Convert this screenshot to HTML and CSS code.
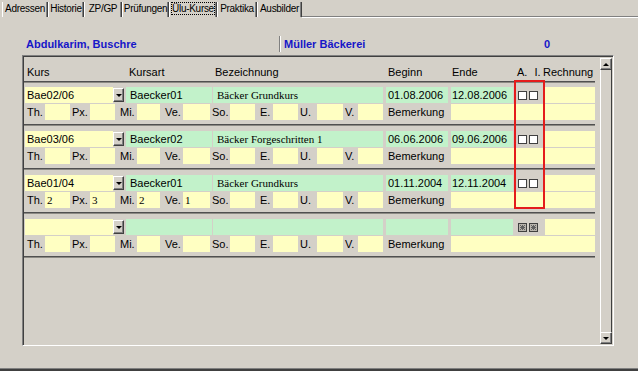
FILE: index.html
```html
<!DOCTYPE html>
<html lang="de">
<head>
  <meta charset="UTF-8" />
  <title>Ülu-Kurse</title>
  <link rel="stylesheet" href="styles.css">
</head>
<body>

<div class="tabs">
  <div class="tab t-adr">Adressen</div>
  <div class="tab t-his">Historie</div>
  <div class="tab t-zp">ZP/GP</div>
  <div class="tab t-pru">Prüfungen</div>
  <div class="tab t-ulu"><span class="focus">Ülu-Kurse</span></div>
  <div class="tab t-pra">Praktika</div>
  <div class="tab t-aus">Ausbilder</div>
  <div class="tab-rest"></div>
</div>

<div class="info">
  <div class="info-name">Abdulkarim, Buschre</div>
  <div class="info-sep"></div>
  <div class="info-company">Müller Bäckerei</div>
  <div class="info-count">0</div>
</div>

<div class="frame">
  <div class="list">
    <div class="head">
      <div class="pl2">Kurs</div>
      <div></div>
      <div class="pl5">Kursart</div>
      <div class="pl3">Bezeichnung</div>
      <div class="pl5">Beginn</div>
      <div class="pl4">Ende</div>
      <div class="head-ai"><span>A.</span><span>I.</span></div>
      <div class="head-rech">Rechnung</div>
    </div>
    <div class="rule"></div>

    <!-- Kurs 1 -->
    <div class="record">
      <div class="row-a">
        <div class="y pl2">Bae02/06</div>
        <div class="drop"></div>
        <div class="g ml2 pl4">Baecker01</div>
        <div class="g ml1 pl4 serif">Bäcker Grundkurs</div>
        <div class="g ml3 pl2">01.08.2006</div>
        <div class="g ml3 pl1">12.08.2006</div>
        <div class="chk"><span class="box"></span><span class="box"></span></div>
        <div class="y"></div>
      </div>
      <div class="row-b">
        <div class="lbl">Th.</div><div class="y"></div>
        <div class="lbl">Px.</div><div class="y"></div>
        <div class="lbl lbl-wide">Mi.</div><div class="y"></div>
        <div class="lbl lbl-wide">Ve.</div><div class="y"></div>
        <div class="lbl">So.</div><div class="y"></div>
        <div class="lbl lbl-wide">E.</div><div class="y"></div>
        <div class="lbl">U.</div><div class="y"></div>
        <div class="lbl">V.</div><div class="y"></div>
        <div class="lbl ml3">Bemerkung</div><div class="y ml3"></div>
      </div>
      <div class="sep"></div>
    </div>

    <!-- Kurs 2 -->
    <div class="record">
      <div class="row-a">
        <div class="y pl2">Bae03/06</div>
        <div class="drop"></div>
        <div class="g ml2 pl4">Baecker02</div>
        <div class="g ml1 pl4 serif">Bäcker Forgeschritten 1</div>
        <div class="g ml3 pl2">06.06.2006</div>
        <div class="g ml3 pl1">09.06.2006</div>
        <div class="chk"><span class="box"></span><span class="box"></span></div>
        <div class="y"></div>
      </div>
      <div class="row-b">
        <div class="lbl">Th.</div><div class="y"></div>
        <div class="lbl">Px.</div><div class="y"></div>
        <div class="lbl lbl-wide">Mi.</div><div class="y"></div>
        <div class="lbl lbl-wide">Ve.</div><div class="y"></div>
        <div class="lbl">So.</div><div class="y"></div>
        <div class="lbl lbl-wide">E.</div><div class="y"></div>
        <div class="lbl">U.</div><div class="y"></div>
        <div class="lbl">V.</div><div class="y"></div>
        <div class="lbl ml3">Bemerkung</div><div class="y ml3"></div>
      </div>
      <div class="sep"></div>
    </div>

    <!-- Kurs 3 -->
    <div class="record">
      <div class="row-a">
        <div class="y pl2">Bae01/04</div>
        <div class="drop"></div>
        <div class="g ml2 pl4">Baecker01</div>
        <div class="g ml1 pl4 serif">Bäcker Grundkurs</div>
        <div class="g ml3 pl2">01.11.2004</div>
        <div class="g ml3 pl1">12.11.2004</div>
        <div class="chk"><span class="box"></span><span class="box"></span></div>
        <div class="y"></div>
      </div>
      <div class="row-b">
        <div class="lbl">Th.</div><div class="y num">2</div>
        <div class="lbl">Px.</div><div class="y num">3</div>
        <div class="lbl lbl-wide">Mi.</div><div class="y num">2</div>
        <div class="lbl lbl-wide">Ve.</div><div class="y num">1</div>
        <div class="lbl">So.</div><div class="y"></div>
        <div class="lbl lbl-wide">E.</div><div class="y"></div>
        <div class="lbl">U.</div><div class="y"></div>
        <div class="lbl">V.</div><div class="y"></div>
        <div class="lbl ml3">Bemerkung</div><div class="y ml3"></div>
      </div>
      <div class="sep"></div>
    </div>

    <!-- neuer Kurs -->
    <div class="record">
      <div class="row-a">
        <div class="y"></div>
        <div class="drop"></div>
        <div class="g ml2"></div>
        <div class="g ml1"></div>
        <div class="g ml3"></div>
        <div class="g ml3"></div>
        <div class="chk">
          <svg class="box-off" width="9" height="9" viewBox="0 0 9 9"><rect x="0.5" y="0.5" width="8" height="8" fill="#b8b4ac" stroke="#404040"/><path d="M2 2l5 5M7 2l-5 5M4.5 2v5M2 4.5h5" stroke="#606060" stroke-width="1"/></svg>
          <svg class="box-off" width="9" height="9" viewBox="0 0 9 9"><rect x="0.5" y="0.5" width="8" height="8" fill="#b8b4ac" stroke="#404040"/><path d="M2 2l5 5M7 2l-5 5M4.5 2v5M2 4.5h5" stroke="#606060" stroke-width="1"/></svg>
        </div>
        <div class="y"></div>
      </div>
      <div class="row-b">
        <div class="lbl">Th.</div><div class="y"></div>
        <div class="lbl">Px.</div><div class="y"></div>
        <div class="lbl lbl-wide">Mi.</div><div class="y"></div>
        <div class="lbl lbl-wide">Ve.</div><div class="y"></div>
        <div class="lbl">So.</div><div class="y"></div>
        <div class="lbl lbl-wide">E.</div><div class="y"></div>
        <div class="lbl">U.</div><div class="y"></div>
        <div class="lbl">V.</div><div class="y"></div>
        <div class="lbl ml3">Bemerkung</div><div class="y ml3"></div>
      </div>
      <div class="sep"></div>
    </div>

    <div class="mark"></div>
  </div>

  <div class="scroll">
    <div class="sb-btn sb-up"></div>
    <div class="sb-track"></div>
    <div class="sb-btn sb-down"></div>
  </div>
</div>

<div class="bottom"></div>

</body>
</html>
```

FILE: styles.css
```css
body {
  margin: 0;
  width: 638px;
  height: 371px;
  box-sizing: border-box;
  padding-top: 2px;
  display: flex;
  flex-direction: column;
  overflow: hidden;
  background: #d4d0c8;
  color: #000;
  font-family: "Liberation Sans", Arial, sans-serif;
  font-size: 11px;
}

/* tab strip */
.tabs {
  display: flex;
  height: 15px;
  padding-left: 2px;
}

.tab {
  box-sizing: border-box;
  height: 15px;
  border-left: 1px solid #fff;
  border-right: 1px solid #404040;
  box-shadow: inset -1px 0 #808080;
  font-size: 10px;
  letter-spacing: -0.3px;
  line-height: 14px;
  text-align: center;
  white-space: nowrap;
}

.t-adr { width: 46px; }
.t-his { width: 36px; }
.t-zp  { width: 38px; }
.t-pru { width: 47px; }
.t-ulu { width: 48px; padding: 0 1px; }
.t-pra { width: 40px; }
.t-aus { width: 45px; }

.focus {
  display: block;
  height: 13px;
  line-height: 12px;
  border: 1px dotted #000;
  box-sizing: border-box;
}

.tab-rest {
  flex: 1;
  height: 14px;
  border-bottom: 1px solid #808080;
  box-shadow: 0 1px #fff;
}

/* person / company line */
.info {
  display: flex;
  margin-top: 20px;
  padding-left: 26px;
  height: 14px;
  line-height: 14px;
  font-weight: bold;
  color: #1616c8;
}

.info-name {
  width: 253px;
}

.info-sep {
  height: 16px;
  margin-top: -1px;
  border-left: 1px solid #808080;
  border-right: 1px solid #fff;
}

.info-company {
  width: 260px;
  padding-left: 3px;
}

/* sunken list frame */
.frame {
  display: flex;
  width: 592px;
  height: 291px;
  box-sizing: border-box;
  margin: 4px 0 0 22px;
  padding: 1px;
  border: 1px solid;
  border-color: #808080 #fff #fff #808080;
  box-shadow: inset 1px 1px #404040;
}

.list {
  flex: 1;
  position: relative;
  padding-left: 1px;
}

.head,
.row-a {
  display: grid;
  grid-template-columns: 88px 11px 88px 171px 65px 65px 32px 50px;
}

.head {
  padding: 8px 0 2px;
  line-height: 14px;
}

.head-ai {
  display: flex;
  gap: 7px;
  padding-left: 4px;
}

.head-rech {
  margin-left: -2px;
}

.rule,
.sep {
  width: 571px;
  margin-left: -1px;
  height: 1px;
  background: #505050;
  border-bottom: 1px solid #8c8a84;
}

.record {
  padding-top: 4px;
}

.sep {
  margin-top: 4px;
  margin-bottom: 1px;
}

.row-a,
.row-b {
  height: 16px;
  line-height: 16px;
  white-space: nowrap;
}

.row-b {
  display: grid;
  grid-template-columns: 20px 25px 20px 25px 22px 23px 23px 27px 20px 25px 18px 25px 19px 26px 15px 25px 65px 147px;
  margin-top: 1px;
}

.y { background: #ffffc2; }
.g { background: #c2f2ca; }

.pl1 { padding-left: 1px; }
.pl2 { padding-left: 2px; }
.pl3 { padding-left: 3px; }
.pl4 { padding-left: 4px; }
.pl5 { padding-left: 5px; }
.ml1 { margin-left: 1px; }
.ml2 { margin-left: 2px; }
.ml3 { margin-left: 3px; }

.serif,
.num {
  font-family: "Liberation Serif", "Times New Roman", serif;
  font-size: 11px;
}

.num {
  padding-left: 2px;
}

.lbl {
  padding-left: 2px;
}

.lbl-wide {
  padding-left: 5px;
}

.row-b .ml3 {
  padding-left: 2px;
}

/* combo dropdown button */
.drop {
  position: relative;
  height: 14px;
  margin-top: 1px;
  box-sizing: border-box;
  border: 1px solid;
  border-color: #fff #404040 #404040 #fff;
  box-shadow: inset -1px -1px #808080;
  background: #d4d0c8;
}

.drop::after {
  content: "";
  position: absolute;
  left: 2px;
  top: 5px;
  border-left: 3px solid transparent;
  border-right: 3px solid transparent;
  border-top: 3px solid #000;
}

/* A. / I. checkboxes */
.chk {
  display: flex;
  align-items: center;
  gap: 2px;
  padding-left: 5px;
}

.box {
  width: 9px;
  height: 9px;
  box-sizing: border-box;
  border: 1px solid #404040;
  background: #fff;
}

.box-off {
  display: block;
}

/* red marker round the checkbox column */
.mark {
  position: absolute;
  left: 490px;
  top: 23px;
  width: 31px;
  height: 129px;
  box-sizing: border-box;
  border: 2px solid #e41c1c;
}

/* vertical scrollbar */
.scroll {
  width: 12px;
  display: flex;
  flex-direction: column;
  padding-top: 1px;
}

.sb-track {
  flex: 1;
  background: #d4d0c8;
  border-left: 1px solid #fff;
  border-right: 1px solid #404040;
}

.sb-btn {
  position: relative;
  height: 12px;
  box-sizing: border-box;
  border: 1px solid;
  border-color: #fff #404040 #404040 #fff;
  box-shadow: inset -1px -1px #808080;
  background: #d4d0c8;
}

.sb-btn::after {
  content: "";
  position: absolute;
  left: 2px;
  top: 4px;
  border-left: 3px solid transparent;
  border-right: 3px solid transparent;
}

.sb-up::after {
  border-bottom: 3px solid #000;
}

.sb-down::after {
  border-top: 3px solid #000;
}

.bottom {
  margin-top: auto;
  height: 2px;
  border-top: 1px solid #808080;
  background: #404040;
}
```
